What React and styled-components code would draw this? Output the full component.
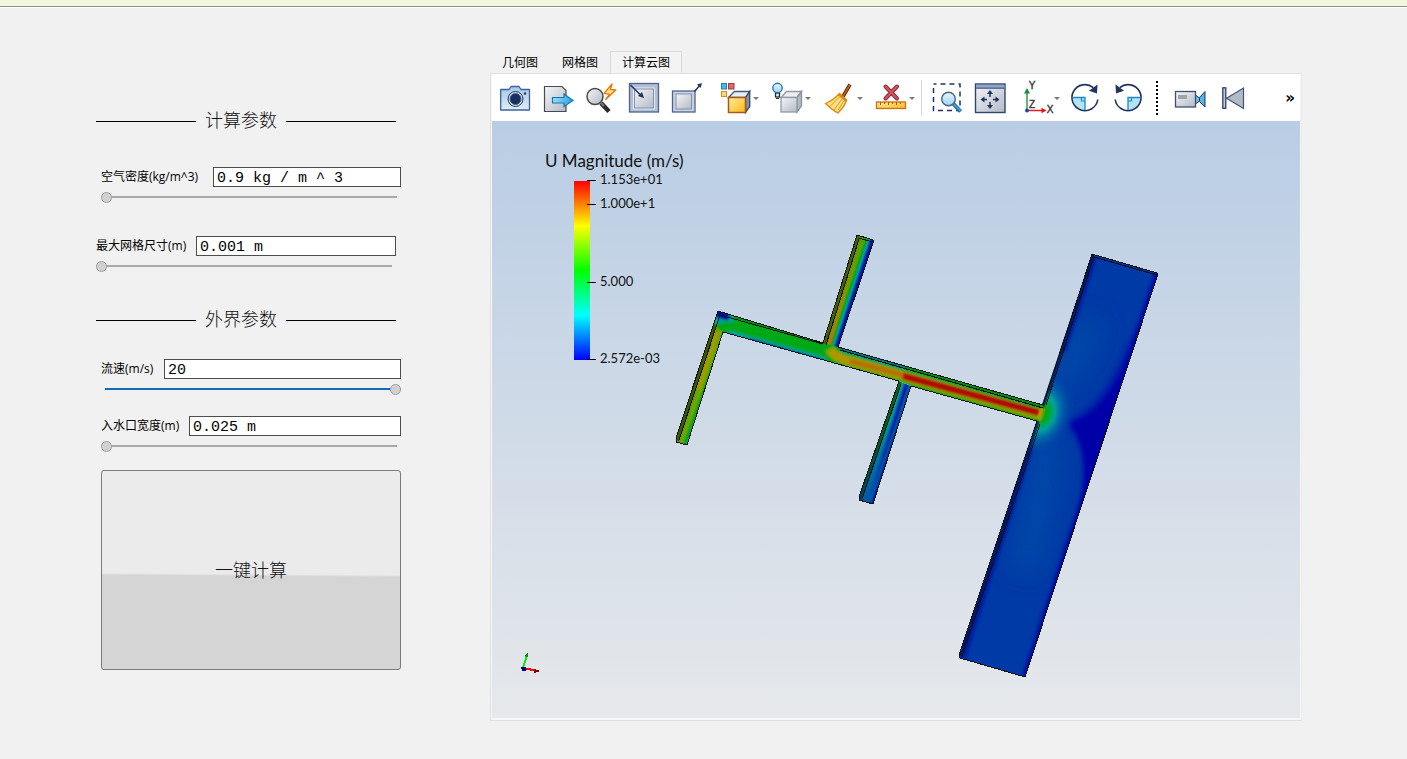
import React, { useState } from 'react'
import styled, { createGlobalStyle, css } from 'styled-components'

const GlobalStyle = createGlobalStyle`
  * {
    box-sizing: border-box;
  }

  body {
    margin: 0;
    background: #f1f1f1;
    color: #000;
    font-family: "Open Sans", "Noto Sans CJK SC", sans-serif;
    font-size: 12px;
  }

  button, input {
    font: inherit;
    color: inherit;
  }
`;

const Page = styled.div`
  min-height: 100vh;
  display: flex;
  flex-direction: column;
`;

const TopStrip = styled.div`
  height: 7px;
  background: #f3f7dc;
  border-bottom: 1px solid #8a9090;
  box-shadow: 0 1px 0 #fdfdfd;
`;

const Main = styled.main`
  flex: 1;
  display: flex;
  gap: 89px;
  padding: 0 105px 38px 96px;
`;

/* ---------- left side: parameters ---------- */

const Form = styled.form`
  flex: 0 0 305px;
  padding-top: 102px;
`;

const Section = styled.section`
  display: flex;
  flex-direction: column;
  gap: ${(props) => props.$gap}px;
  margin-bottom: ${(props) => props.$after}px;
`;

const SectionTitle = styled.h2`
  display: flex;
  align-items: center;
  gap: 9px;
  width: 300px;
  height: 24px;
  margin: 0 0 ${(props) => props.$space}px;
  font-family: "Liberation Serif", "Noto Sans CJK SC", serif;
  font-size: 18px;
  font-weight: 300;
  line-height: 24px;
  color: #111;

  &::before,
  &::after {
    content: "";
    height: 1px;
    background: #000;
  }

  &::before {
    width: 100px;
  }

  &::after {
    flex: 1;
  }
`;

const Field = styled.div`
  width: 300px;
  margin-left: ${(props) => (props.$indent ? 5 : 0)}px;
`;

const FieldRow = styled.div`
  display: flex;
  align-items: center;
  height: 20px;
  margin-bottom: 5px;
`;

const Label = styled.label`
  flex: 0 0 ${(props) => props.$width}px;
  line-height: 20px;
  white-space: nowrap;
`;

const TextBox = styled.input`
  flex: 1;
  min-width: 0;
  height: 20px;
  padding: 2px 3px 0;
  border: 1px solid #4d4d4d;
  background: #fff;
  font-family: "Liberation Mono", monospace;
  font-size: 15px;
  outline: none;
`;

const thumb = css`
  -webkit-appearance: none;
  width: 11px;
  height: 11px;
  border: 1px solid #a0a0a0;
  border-radius: 50%;
  background: #d1d1d1;
`;

const Slider = styled.input`
  -webkit-appearance: none;
  appearance: none;
  display: block;
  width: 100%;
  height: 11px;
  margin: 0;
  background: linear-gradient(${(props) => (props.$full ? '#0f6bbd, #0f6bbd' : '#a9a9a9, #a9a9a9')}) no-repeat;
  background-size: calc(100% - 4px) 2px;
  background-position: ${(props) => (props.$full ? 4 : 0)}px 4px;
  outline: none;

  &::-webkit-slider-thumb {
    ${thumb}
  }
`;

const RunButton = styled.button`
  display: block;
  width: 300px;
  height: 200px;
  margin-left: 5px;
  padding: 0 0 3px;
  border: 1px solid #7c7c7c;
  border-radius: 3px;
  background: linear-gradient(180.4deg, #ebebeb 52%, #d5d5d5 53%);
  font-family: "Noto Sans CJK SC", sans-serif;
  font-size: 18px;
  font-weight: 300;
  color: #111;
`;

/* ---------- right side: viewer ---------- */

const Viewer = styled.section`
  flex: 1;
  min-width: 0;
  display: flex;
  flex-direction: column;
  padding-top: 44px;
`;

const TabList = styled.div`
  display: flex;
  height: 22px;
`;

const Tab = styled.button`
  padding: 1px 11px 0;
  border: 1px solid ${(props) => (props.$active ? '#d9d9d9' : 'transparent')};
  border-bottom: 0;
  background: ${(props) => (props.$active ? '#f3f3f3' : 'transparent')};
  line-height: 20px;
`;

const Panel = styled.div`
  flex: 1;
  display: flex;
  flex-direction: column;
  padding: 0 1px 2px 1px;
  border: 1px solid #e0e0e0;
  border-right-color: #eaeaea;
  background: #f6f6f6;
`;

const ToolBar = styled.div`
  display: flex;
  height: 47px;
  padding-left: 2px;
  background: #fff;
`;

const ToolGroup = styled.div`
  display: flex;
  margin-left: ${(props) => props.$before || 0}px;
`;

const ToolButton = styled.button`
  display: flex;
  width: ${(props) => (props.$menu ? 52 : 43)}px;
  padding: 8px 0 0 ${(props) => (props.$menu ? 9 : 6)}px;
  border: 0;
  background: none;

  svg {
    flex: none;
    overflow: visible;
  }
`;

const Caret = styled.span`
  margin: 15px 0 0 1px;
  border: 3px solid transparent;
  border-top-color: #7a7a7a;
  border-bottom: 0;
`;

const Separator = styled.span`
  width: 1px;
  height: 36px;
  margin: 6px 4px 0 2px;
  background: #d8d8d8;
`;

const Grip = styled.span`
  width: 2px;
  height: 34px;
  margin: 7px 0 0 6px;
  background: repeating-linear-gradient(#000 0 2px, transparent 2px 4px);
`;

const MoreButton = styled.button`
  margin-left: auto;
  padding: 0 5px;
  border: 0;
  background: none;
  font-family: "DejaVu Sans", sans-serif;
  font-size: 15px;
  font-weight: 700;
  line-height: 44px;
`;

const Viewport = styled.div`
  flex: 1;
  background: linear-gradient(#b9cde4, #e6e8eb);

  svg {
    display: block;
    width: 100%;
    font-family: Lato, sans-serif;
  }
`;

const navy = '#1f3462';

const Icon = ({ children }) => (
  <svg width="32" height="32" viewBox="0 0 32 32" fill="none" aria-hidden="true">{children}</svg>
)

const HiddenSvg = styled.svg`
  display: block;
  width: 0;
  height: 0;
`;

// gradients used by several icons
const IconDefs = () => (
  <HiddenSvg aria-hidden="true">
    <defs>
      <linearGradient id="steel" x1="0" y1="0" x2="1" y2="1">
        <stop offset="0" stopColor="#f4f5f7" />
        <stop offset="1" stopColor="#b4bac6" />
      </linearGradient>
      <linearGradient id="sky" x1="0" y1="0" x2="0" y2="1">
        <stop offset="0" stopColor="#eaf6fd" />
        <stop offset="1" stopColor="#9fd3f2" />
      </linearGradient>
      <linearGradient id="arrowBlue" x1="0" y1="0" x2="1" y2="0">
        <stop offset="0" stopColor="#9bdcf8" />
        <stop offset="1" stopColor="#26a4e2" />
      </linearGradient>
      <linearGradient id="gold" x1="0" y1="0" x2="1" y2="1">
        <stop offset="0" stopColor="#ffec9c" />
        <stop offset="1" stopColor="#fbb91c" />
      </linearGradient>
      <linearGradient id="camera" x1="0" y1="0" x2="0" y2="1">
        <stop offset="0" stopColor="#a5c6e8" />
        <stop offset="1" stopColor="#dfecf8" />
      </linearGradient>
    </defs>
  </HiddenSvg>
)

const CameraIcon = () => (
  <Icon>
    <path d="M.7 7.500h8.300l2-3h8l2 3h8.500v20.500h-28.800z" fill="url(#camera)" stroke="#3c6498" strokeWidth="1.300" strokeLinejoin="round" />
    <circle cx="15.500" cy="17" r="7.500" fill="#d3dfee" stroke={navy} />
    <circle cx="15.500" cy="17" r="5.500" fill="#17305f" stroke="#3d5e8d" strokeWidth="1" />
    <circle cx="25" cy="11.500" r="1.200" fill={navy} />
  </Icon>
)

const ExportIcon = () => (
  <Icon>
    <path d="M1.500 4.500h17.500l4 4v21h-21.500z" fill="url(#steel)" stroke="#4a4a4e" strokeWidth="1.200" />
    <path d="M9.500 15.500h11.500v-3.500l9 6.500-9 6v-3.500h-11.500z" fill="url(#arrowBlue)" stroke="#1876b4" strokeWidth="1.200" />
  </Icon>
)

const BoltZoomIcon = () => (
  <Icon>
    <path d="M15 21l8 8.500" stroke="#2b2b2e" strokeWidth="4.500" />
    <path d="M15 21l3 3" stroke="#77777c" strokeWidth="2" />
    <circle cx="9" cy="14.500" r="8" fill="url(#steel)" stroke="#4a4a4e" strokeWidth="1.500" />
    <path d="M26 2l-8 9.300 5.500 1-3.800 5.200 10-9.500-5.200-.7z" fill="#ffdd78" stroke="#e0780c" strokeWidth="1.300" strokeLinejoin="round" />
  </Icon>
)

const ResetViewIcon = () => (
  <Icon>
    <rect x="0.500" y="1.500" width="29" height="28.500" fill="#b3bfd2" stroke="#4b648f" strokeWidth="1.300" />
    <rect x="4.500" y="6" width="21" height="21" fill="#dfe3ea" stroke="#e7ebf2" />
    <rect x="5.500" y="7" width="19" height="19" fill="url(#steel)" stroke="#7f90ae" />
    <path d="M1.500 3l12 12" stroke={navy} strokeWidth="1.600" />
    <path d="M15 16l-6-2 4-4z" fill={navy} />
  </Icon>
)

const ZoomToBoxIcon = () => (
  <Icon>
    <rect x="0.500" y="9" width="22.500" height="21" fill="#c9d1df" stroke="#4b648f" strokeWidth="1.300" />
    <rect x="4" y="12" width="15.500" height="15" fill="url(#steel)" stroke="#8191ad" />
    <path d="M22.500 9.500l6-7" stroke={navy} strokeWidth="1.400" />
    <path d="M30 1l-5 1.500 3.500 3.500z" fill={navy} />
  </Icon>
)

const ColorCubeIcon = () => (
  <Icon>
    <rect x="1.500" y="1.500" width="5" height="5.500" fill="#4fb6e8" stroke="#2a7eae" />
    <rect x="8.500" y="1.500" width="5.500" height="5.500" fill="#d86a70" stroke="#a23a42" />
    <rect x="1.500" y="9.500" width="5" height="5" fill="#ffd978" stroke="#d9861a" />
    <path d="M8.500 15.500l6-6h15.200l-4.200 6z" fill="#e8edf5" stroke="#4a5878" strokeWidth="1.300" />
    <path d="M25.500 15.500l4.200-6v15l-4.200 6z" fill="#8391ae" stroke="#35435f" strokeWidth="1.300" />
    <rect x="8.500" y="15.500" width="17" height="15" fill="url(#gold)" stroke="#a85a10" strokeWidth="1.500" />
  </Icon>
)

const BulbCubeIcon = () => (
  <Icon>
    <path d="M9 15.500l5.500-6h15l-4.500 6z" fill="#eceef1" stroke="#949aa5" strokeWidth="1.300" />
    <path d="M25 15.500l4.500-6v14.500l-4.500 6z" fill="#b3b8c1" stroke="#8c929d" strokeWidth="1.300" />
    <rect x="9" y="15.500" width="16" height="14.500" fill="url(#steel)" stroke="#949aa5" strokeWidth="1.300" />
    <rect x="3.500" y="11" width="4" height="4" fill="#e7e9ec" stroke="#2b2b2e" strokeWidth="1.300" />
    <path d="M4 16.500h3" stroke="#2b2b2e" />
    <circle cx="5.500" cy="6" r="4.700" fill="url(#sky)" stroke="#2779ae" strokeWidth="1.400" />
  </Icon>
)

const BroomIcon = () => (
  <Icon>
    <path d="M26 2.500l-7 12" stroke="#6e2c08" strokeWidth="3.600" />
    <path d="M26 2.500l-7 12" stroke="#b8601c" strokeWidth="1.600" />
    <path d="M15.500 11.500l7 6.500q-2 7-8.500 13-6-3-12.500-9.500 8-3.500 14-10z" fill="#ffdf7e" stroke="#d98b12" strokeWidth="1.300" />
    <path d="M15.500 15l-9 9M18 17l-8 11M20 19l-6 9" stroke="#d99a20" />
    <path d="M14.500 12l8 7" stroke="#d9861a" strokeWidth="2.500" />
  </Icon>
)

const RulerIcon = () => (
  <Icon>
    <path d="M9.500 4.500l11.500 12M21 4.500l-11.500 12" stroke="#8f2230" strokeWidth="4" strokeLinecap="round" />
    <path d="M9.500 4.500l11.500 12M21 4.500l-11.500 12" stroke="#cf5660" strokeWidth="2.200" strokeLinecap="round" />
    <rect x="0.500" y="20" width="29" height="6.500" fill="url(#gold)" stroke="#c9700f" strokeWidth="1.300" />
    <path d="M4.500 20v3M8.500 20v2M12.500 20v3M16.500 20v2M20.500 20v3M24.500 20v2" stroke="#a85a10" />
  </Icon>
)

const SelectZoomIcon = () => (
  <Icon>
    <rect x="1.500" y="2" width="26.500" height="26.500" stroke={navy} strokeWidth="1.500" strokeDasharray="5 4" strokeDashoffset="2" />
    <path d="M21.500 22l7 7.500" stroke="#145f94" strokeWidth="4" />
    <path d="M21.500 22l7 7" stroke="#3fa0d8" strokeWidth="1.800" />
    <circle cx="16.500" cy="17" r="6.800" fill="url(#sky)" stroke="#406788" strokeWidth="1.400" />
  </Icon>
)

const PanIcon = () => (
  <Icon>
    <rect x="0.500" y="2" width="29.500" height="28.500" fill="url(#steel)" stroke="#2f4672" strokeWidth="1.400" />
    <path d="M1 3h28.500v3h-28.500z" fill="#8da6cc" />
    <path d="M1 6.200h28.500" stroke="#2f4672" />
    <path d="M15 10v5M15 20v5M7 17.500h5M18 17.500h5" stroke={navy} strokeWidth="1.500" />
    <path d="M15 8l3 4h-6zM15 27l3-4h-6zM5.500 17.500l4-3v6zM24.500 17.500l-4-3v6z" fill={navy} />
  </Icon>
)

const AxesIcon = () => (
  <Icon>
    <path d="M6 28v-18" stroke="#2e9a4c" strokeWidth="1.500" />
    <path d="M6 6l3 5.500h-6z" fill="#1d8a3d" />
    <path d="M6 28.500h15" stroke="#e02020" strokeWidth="1.500" />
    <path d="M25.500 28.500l-5-2.800v5.600z" fill="#e81010" />
    <circle cx="6" cy="28.500" r="2" fill="#1f46a8" />
    <g fill="#333" stroke="#333" strokeWidth="0.400" fontFamily="Liberation Sans, sans-serif" fontSize="10" textAnchor="middle">
      <text x="11" y="7">Y</text>
      <text x="11" y="25.500">Z</text>
      <text x="29" y="31">X</text>
    </g>
  </Icon>
)

const RotateShape = () => (
  <>
    <path d="M2.500 15.500h12.500v13q-11-1-12.500-13z" fill="#b3e3f8" />
    <path d="M2.500 15.500h12.500v13" stroke="#2089bf" strokeWidth="1.300" />
    <path d="M11.500 15.500v3.500h3.500" stroke="#2089bf" strokeWidth="1.200" />
    <path d="M27.800 17.500a13 13 0 1 1-4.500-11.800" stroke={navy} strokeWidth="1.600" />
    <path d="M27.500 2.500l-.5 9-8-2.800z" fill={navy} />
  </>
)

const RotateCwIcon = () => <Icon><RotateShape /></Icon>
const RotateCcwIcon = () => <Icon><g transform="translate(30 0) scale(-1 1)"><RotateShape /></g></Icon>

const CamcorderIcon = () => (
  <Icon>
    <path d="M21.500 13l4 3v3l-4 3z" fill="#6fc0e8" stroke={navy} />
    <path d="M31 9.500v15.500l-5.500-5.500v-4z" fill="#58b2e2" stroke={navy} />
    <rect x="1.500" y="9.500" width="20" height="15.500" fill="url(#steel)" stroke="#3f4f70" strokeWidth="1.300" />
    <rect x="4" y="13" width="9" height="4" fill="#a0a3aa" />
  </Icon>
)

const FirstIcon = () => (
  <Icon>
    <path d="M26.500 6v20.500l-17-10.300z" fill="#b3b9c5" stroke="#40547c" strokeWidth="1.200" />
    <rect x="5.800" y="5.800" width="3" height="20.500" fill="#c3cad6" stroke={navy} strokeWidth="1.200" />
  </Icon>
)

const mainTools = [
  { name: '截图', icon: CameraIcon },
  { name: '导出', icon: ExportIcon },
  { name: '缩放到数据', icon: BoltZoomIcon },
  { name: '重置视图', icon: ResetViewIcon },
  { name: '缩放到框', icon: ZoomToBoxIcon },
]

const menuTools = [
  { name: '着色', icon: ColorCubeIcon },
  { name: '光源', icon: BulbCubeIcon },
  { name: '清除', icon: BroomIcon },
  { name: '删除标尺', icon: RulerIcon },
]

const viewTools = [
  { name: '框选缩放', icon: SelectZoomIcon },
  { name: '平移', icon: PanIcon },
  { name: '坐标轴', icon: AxesIcon, menu: true },
  { name: '顺时针旋转', icon: RotateCwIcon },
  { name: '逆时针旋转', icon: RotateCcwIcon },
]

const playTools = [
  { name: '录像', icon: CamcorderIcon },
  { name: '第一帧', icon: FirstIcon },
]

const Tools = ({ items, menu, before }) => (
  <ToolGroup $before={before}>
    {items.map((tool) => (
      <ToolButton key={tool.name} type="button" aria-label={tool.name} $menu={menu || tool.menu}>
        <tool.icon />
        {(menu || tool.menu) && <Caret />}
      </ToolButton>
    ))}
  </ToolGroup>
)

const Stops = ({ list }) => list.map(([offset, color]) => <stop key={offset} offset={offset} stopColor={color} />)

const rainbow = [
  [0, '#f00'], [0.12, '#ff7800'], [0.25, '#ff0'], [0.5, '#0f0'], [0.75, '#0ff'], [1, '#00f'],
]

const legendTicks = [
  { y: 180, label: '1.153e+01' },
  { y: 204, label: '1.000e+1' },
  { y: 282, label: '5.000' },
  { y: 359, label: '2.572e-03' },
]

const shapes = {
  tank: '1092,254 1157,273 1157,277 1025,677 960,658 959,655',
  duct: '718,311 823,343 839,347 1043,405 1046,424 1037,421 911,386 899,381 723,332 714,324',
  left: '718,311 727,322 723,332 687,445 676,442 676,438',
  top: '857,235 873,240 873,243 838,349 832,356 823,344',
  bottom: '899,381 911,386 873,504 859,500 859,497',
}

const FlowPlot = () => (
  <svg viewBox="492 121 808 597" preserveAspectRatio="xMinYMin meet" role="img" aria-label="U Magnitude">
    <defs>
      <linearGradient id="rainbow" x1="0" y1="0" x2="0" y2="1"><Stops list={rainbow} /></linearGradient>
      <linearGradient id="topPipe" gradientUnits="userSpaceOnUse" x1="824" y1="344" x2="839" y2="349">
        <Stops list={[[0.15, '#5c9800'], [0.3, '#5aa400'], [0.45, '#00a818'], [0.6, '#00a0a0'], [0.76, '#0020a8'], [0.9, '#0010a8'], [1, '#0048a8']]} />
      </linearGradient>
      <linearGradient id="leftPipe" gradientUnits="userSpaceOnUse" x1="676" y1="440" x2="687" y2="444">
        <Stops list={[[0.15, '#6a9c00'], [0.55, '#6ea800'], [0.8, '#00a818'], [1, '#00a070']]} />
      </linearGradient>
      <linearGradient id="bottomPipe" gradientUnits="userSpaceOnUse" x1="859" y1="499" x2="873" y2="503.500">
        <Stops list={[[0.15, '#00a81c'], [0.28, '#00a850'], [0.42, '#00a0a4'], [0.6, '#0040a8'], [0.72, '#0010a8'], [0.85, '#0050a8'], [1, '#0058a8']]} />
      </linearGradient>
      <linearGradient id="bottomFade" x1="0" y1="0" x2="0" y2="1">
        <Stops list={[[0, 'rgba(0,88,168,0)'], [0.3, 'rgba(0,88,168,0.1)'], [0.8, 'rgba(0,88,168,0.8)'], [1, 'rgba(0,88,168,1)']]} />
      </linearGradient>
      <linearGradient id="warmFade" x1="0" y1="0" x2="0" y2="1">
        <Stops list={[[0, 'rgba(150,150,0,0)'], [0.4, 'rgba(160,140,0,0.6)'], [1, 'rgba(190,115,0,1)']]} />
      </linearGradient>
      <radialGradient id="inlet" gradientUnits="userSpaceOnUse" cx="0" cy="0" r="40" gradientTransform="translate(1041 413) rotate(18) scale(0.85 1.15)">
        <Stops list={[[0, '#b0a000'], [0.08, '#7aa800'], [0.16, '#00a818'], [0.26, '#00a860'], [0.4, '#00a0a0'], [0.6, 'rgba(0,112,168,0.7)'], [0.8, 'rgba(0,80,168,0.35)'], [1, 'rgba(0,64,168,0)']]} />
      </radialGradient>
      {Object.keys(shapes).map((key) => (
        <clipPath key={key} id={`clip-${key}`}><polygon points={shapes[key]} /></clipPath>
      ))}
      <filter id="soft1" filterUnits="userSpaceOnUse" x="660" y="220" width="520" height="470"><feGaussianBlur stdDeviation="1" /></filter>
      <filter id="soft2" filterUnits="userSpaceOnUse" x="660" y="220" width="520" height="470"><feGaussianBlur stdDeviation="2" /></filter>
      <filter id="soft4" filterUnits="userSpaceOnUse" x="900" y="220" width="300" height="470"><feGaussianBlur stdDeviation="4" /></filter>
      <filter id="soft12" filterUnits="userSpaceOnUse" x="900" y="220" width="300" height="520"><feGaussianBlur stdDeviation="12" /></filter>
    </defs>

    {/* legend */}
    <text x="545" y="167" fontSize="17" fill="#111">U Magnitude (m/s)</text>
    <rect x="574" y="181" width="16" height="179" fill="url(#rainbow)" />
    {legendTicks.map((tick) => (
      <g key={tick.label}>
        <path d={`M587 ${tick.y + 0.5}h9`} stroke="#000" />
        <text x="600" y={tick.y + 4} fontSize="13" fill="#111">{tick.label}</text>
      </g>
    ))}

    {/* tank */}
    <g clipPath="url(#clip-tank)">
      <polygon points={shapes.tank} fill="#003aa6" />
      <path d="M1055 385Q1080 350 1090 320M1045 440Q1045 500 1022 570" stroke="#0050a8" strokeWidth="30" fill="none" opacity="0.7" filter="url(#soft12)" />
      <path d="M1160 272L1027 677" stroke="#0000a8" strokeWidth="9" filter="url(#soft2)" />
      <path d="M1091 256L1060 350M1028 445L960 656" stroke="#0008a0" strokeWidth="10" filter="url(#soft2)" />
      <path d="M1066 423Q1108 412 1140 320L1125 390L1078 532L1052 610Q1093 500 1086 455Q1082 434 1066 423z" fill="#0000a8" filter="url(#soft4)" />
      <path d="M1070 423Q1100 418 1120 380L1082 508Q1090 450 1070 423z" fill="#0000a8" filter="url(#soft2)" />
      <rect x="990" y="350" width="110" height="130" fill="url(#inlet)" />
      <path d="M1092 254L959 655" stroke="#001c58" strokeWidth="6" opacity="0.8" />
    </g>
    <g fill="none" stroke="#111" shapeRendering="crispEdges">
      <path d="M1043 405L1092 254L1157 273V277L1025 677L960 658L959 655L1037 421" />
      <path d="M1157 275L1094 257L1046 405M1040 424L962 657" />
    </g>

    {/* side branches */}
    <g clipPath="url(#clip-top)">
      <polygon points={shapes.top} fill="url(#topPipe)" />
      <path d="M861 238L828 348" stroke="url(#warmFade)" strokeWidth="4" filter="url(#soft1)" />
      <path d="M857 235L823 344" stroke="#2c2a00" strokeWidth="6" opacity="0.5" />
    </g>
    <g clipPath="url(#clip-bottom)">
      <polygon points={shapes.bottom} fill="url(#bottomPipe)" />
      <polygon points={shapes.bottom} fill="url(#bottomFade)" />
      <path d="M902 420L871 512" stroke="#0000a8" strokeWidth="4" filter="url(#soft1)" />
      <path d="M899 381L859 499" stroke="#002a10" strokeWidth="6" opacity="0.5" />
    </g>
    <g clipPath="url(#clip-left)">
      <polygon points={shapes.left} fill="url(#leftPipe)" />
      <path d="M717 332L698 390" stroke="#a09c00" strokeWidth="5" filter="url(#soft1)" />
      <path d="M718 311L676 440" stroke="#1c2c00" strokeWidth="6" opacity="0.6" />
    </g>

    {/* main duct */}
    <g clipPath="url(#clip-duct)">
      <polygon points={shapes.duct} fill="#00a818" />
      <g fill="none" filter="url(#soft1)">
        <path d="M728 335L825 362" stroke="#00a0a0" strokeWidth="10" />
        <path d="M750 341L822 362" stroke="#0030a8" strokeWidth="5" />
        <path d="M780 351L815 361" stroke="#0000a8" strokeWidth="4" />
        <path d="M714 320L734 319" stroke="#00a0a0" strokeWidth="9" />
        <path d="M716 313L729 317" stroke="#0010a0" strokeWidth="8" />
        <path d="M714 331Q722 323 740 327L820 350" stroke="#00a818" strokeWidth="8" />
        <path d="M840 348L905 367" stroke="#0090a8" strokeWidth="6" />
        <path d="M838 353L1042 411" stroke="#00a830" strokeWidth="5" />
        <path d="M829 348Q834 358 850 362L1043 416" stroke="#78a400" strokeWidth="11" />
        <path d="M831 351Q838 359 852 361L1043 414" stroke="#b09400" strokeWidth="7" />
        <path d="M850 361L906 376L1043 413" stroke="#b87000" strokeWidth="5" />
        <path d="M903 376L1040 413" stroke="#b01000" strokeWidth="7" />
      </g>
      <path d="M735 316L823 343M839 347L1043 405" stroke="#003c00" strokeWidth="4" opacity="0.25" />
    </g>
    <ellipse cx="1047" cy="415" rx="4" ry="10" transform="rotate(18 1047 415)" fill="#00a818" opacity="0.7" filter="url(#soft2)" />
    <path d="M1042 407L1039 419" stroke="#a8a000" strokeWidth="4" filter="url(#soft1)" />

    <g fill="none" stroke="#111" shapeRendering="crispEdges">
      <path d="M1037 421L911 386L873 504L859 500V497L899 381L723 332L687 445L676 442V438L718 311L823 343L857 235L873 240V243L838 347L1043 405" />
      <path d="M720 315L823 344M840 350L1043 408M720 315L679 440" />
      <path d="M859 239L826 345M859 238L872 242M901 384L862 499" />
    </g>

    {/* orientation marker */}
    <g shapeRendering="crispEdges" fill="none">
      <path d="M523 668L527 655" stroke="#00ee10" strokeWidth="2" />
      <path d="M524 656L528 652V657z" fill="#0a8a14" />
      <path d="M523 668L538 671" stroke="#f00" strokeWidth="2" />
      <path d="M534 669L540 671L534 673z" fill="#7a0000" />
      <path d="M521 668h5M522 670h4" stroke="#00007a" strokeWidth="2" />
    </g>
  </svg>
)

const fieldsInner = [
  { id: 'density', label: '空气密度(kg/m^3)', value: '0.9 kg / m ^ 3', width: 112, indent: true, pos: 0 },
  { id: 'mesh', label: '最大网格尺寸(m)', value: '0.001 m', width: 100, indent: false, pos: 0 },
]

const fieldsOuter = [
  { id: 'speed', label: '流速(m/s)', value: '20', width: 63, indent: true, pos: 100 },
  { id: 'inletWidth', label: '入水口宽度(m)', value: '0.025 m', width: 88, indent: true, pos: 0 },
]

const ParamField = ({ field }) => {
  const [pos, setPos] = useState(field.pos)

  return (
    <Field $indent={field.indent}>
      <FieldRow>
        <Label htmlFor={field.id} $width={field.width}>{field.label}</Label>
        <TextBox id={field.id} type="text" defaultValue={field.value} />
      </FieldRow>
      <Slider
        type="range"
        aria-label={field.label}
        value={pos}
        $full={pos > 50}
        onChange={(e) => setPos(Number(e.target.value))}
      />
    </Field>
  )
}

const tabs = ['几何图', '网格图', '计算云图']

const App = () => {
  const [activeTab, setActiveTab] = useState('计算云图')

  return (
    <Page>
      <GlobalStyle />
      <IconDefs />
      <TopStrip />
      <Main>
        <Form onSubmit={(e) => e.preventDefault()}>
          <SectionTitle $space={34}>计算参数</SectionTitle>
          <Section $gap={33} $after={36}>
            {fieldsInner.map((field) => <ParamField key={field.id} field={field} />)}
          </Section>
          <SectionTitle $space={27}>外界参数</SectionTitle>
          <Section $gap={21} $after={18}>
            {fieldsOuter.map((field) => <ParamField key={field.id} field={field} />)}
          </Section>
          <RunButton type="submit">一键计算</RunButton>
        </Form>

        <Viewer>
          <TabList role="tablist">
            {tabs.map((tab) => (
              <Tab
                key={tab}
                type="button"
                role="tab"
                aria-selected={tab === activeTab}
                $active={tab === activeTab}
                onClick={() => setActiveTab(tab)}
              >
                {tab}
              </Tab>
            ))}
          </TabList>
          <Panel>
            <ToolBar role="toolbar">
              <Tools items={mainTools} />
              <Tools items={menuTools} menu before={2} />
              <Separator />
              <Tools items={viewTools} />
              <Grip />
              <Tools items={playTools} before={10} />
              <MoreButton type="button" aria-label="更多">»</MoreButton>
            </ToolBar>
            <Viewport>
              <FlowPlot />
            </Viewport>
          </Panel>
        </Viewer>
      </Main>
    </Page>
  )
}

export default App
